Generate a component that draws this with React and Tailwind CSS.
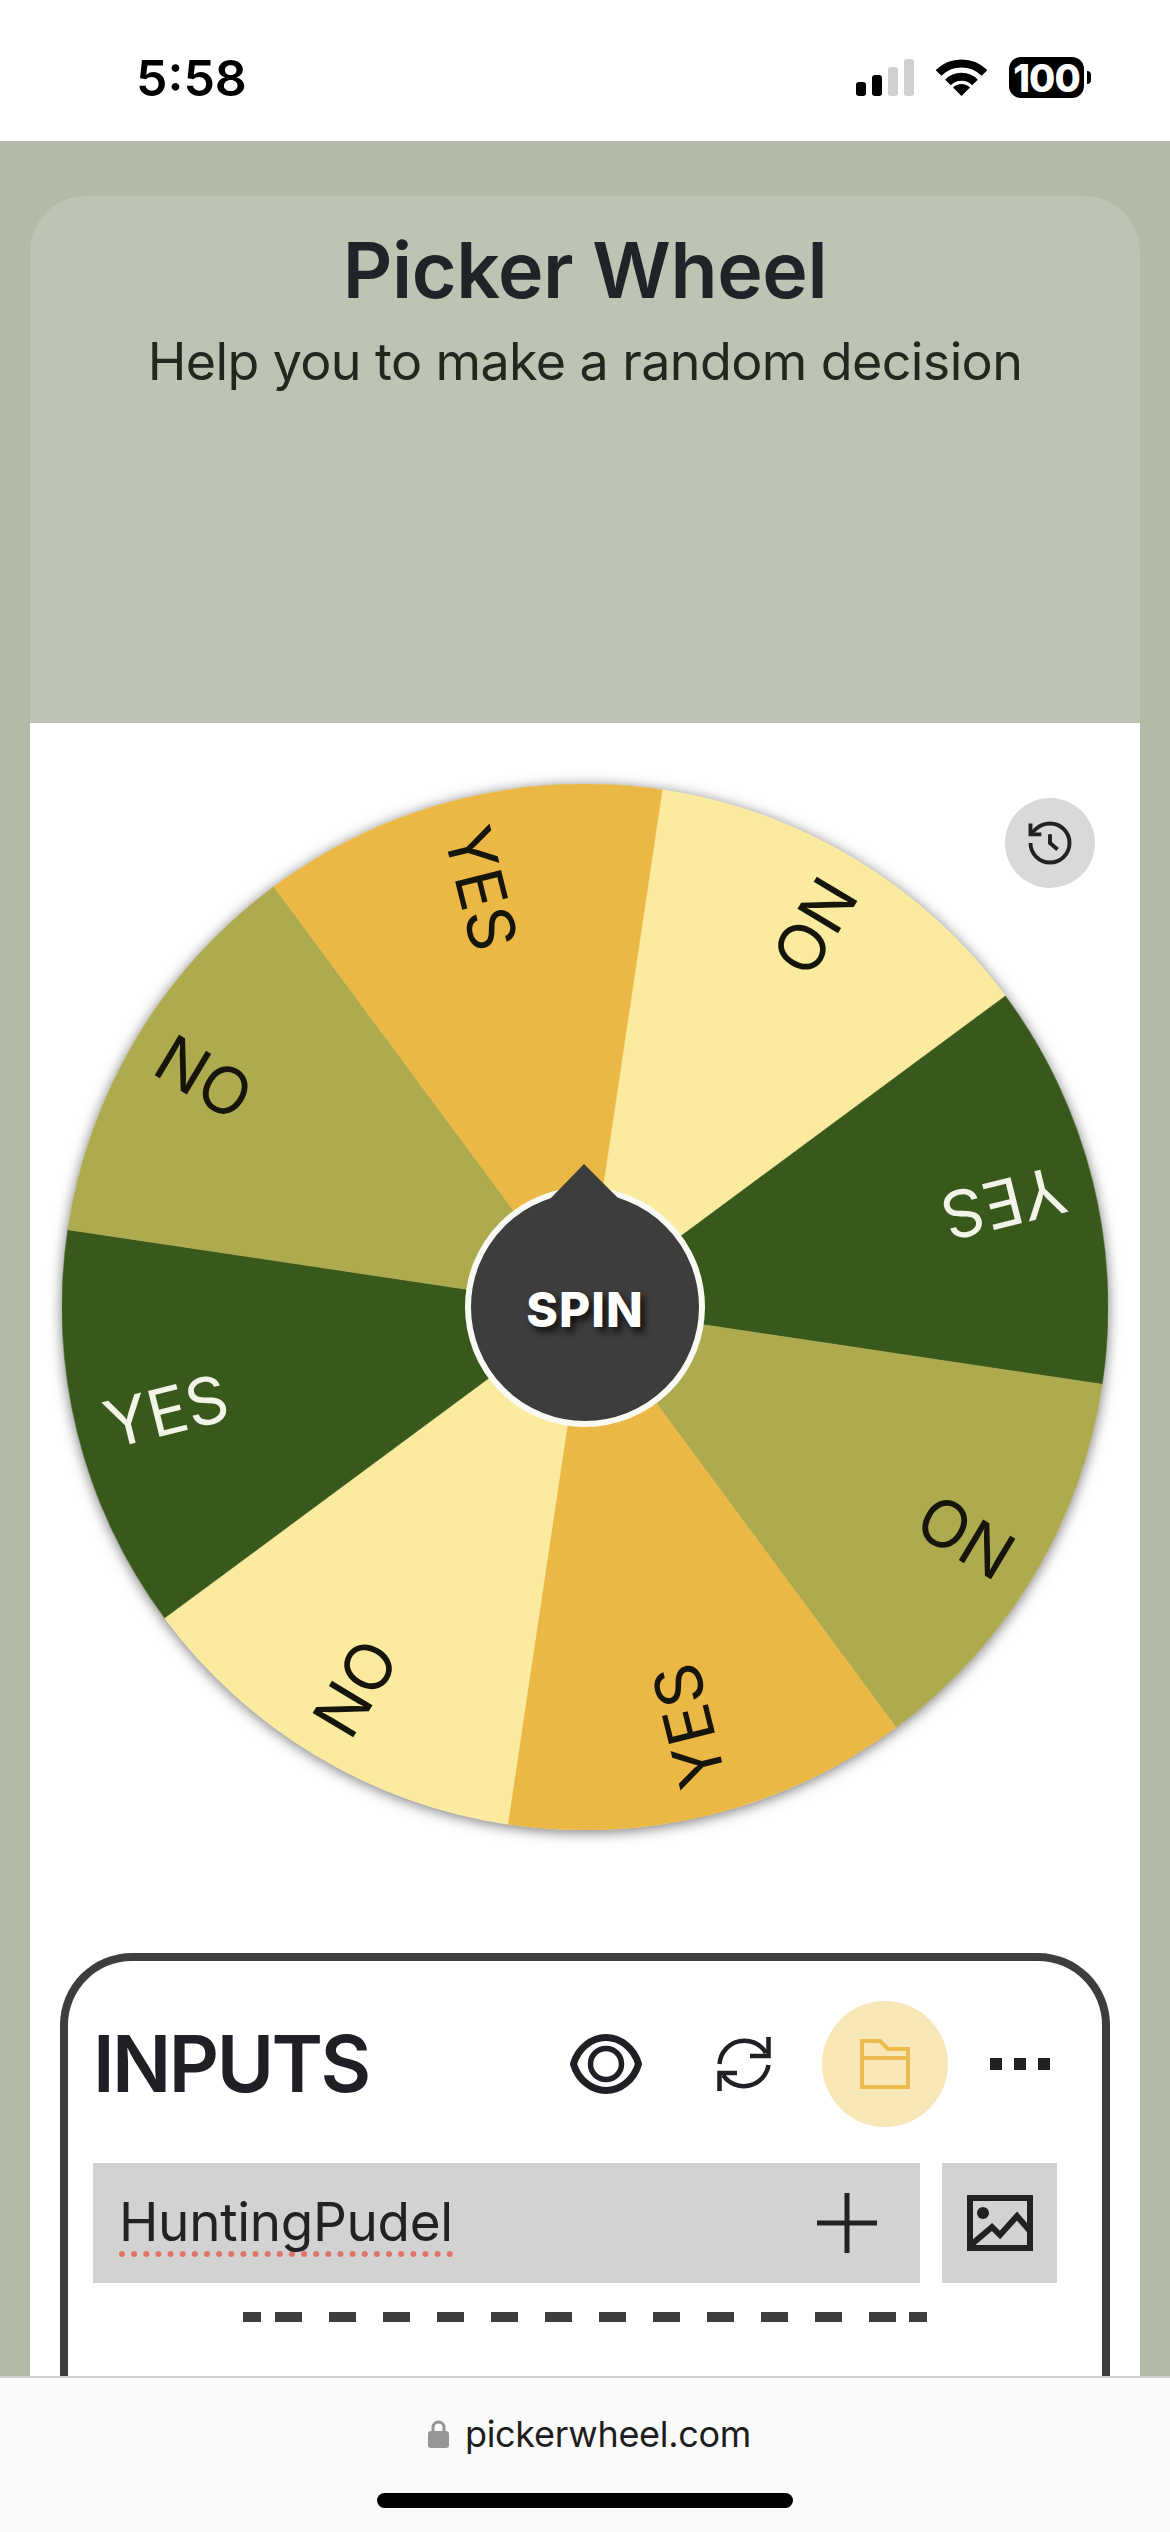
const C = 523;
const R = 523;
const SECTORS = [
  { mid: 31, fill: "#faeb9f", label: "NO", text: "#15150c" },
  { mid: 76, fill: "#38591b", label: "YES", text: "#f2f4e8" },
  { mid: 121, fill: "#aeaa4e", label: "NO", text: "#15150c" },
  { mid: 166, fill: "#ebb845", label: "YES", text: "#15150c" },
  { mid: 211, fill: "#faeb9f", label: "NO", text: "#15150c" },
  { mid: 256, fill: "#38591b", label: "YES", text: "#f2f4e8" },
  { mid: 301, fill: "#aeaa4e", label: "NO", text: "#15150c" },
  { mid: 346, fill: "#ebb845", label: "YES", text: "#15150c" },
];

function point(deg, r) {
  const a = (deg * Math.PI) / 180;
  return [C + r * Math.sin(a), C - r * Math.cos(a)];
}

function sectorPath(mid) {
  const [x1, y1] = point(mid - 22.5, R);
  const [x2, y2] = point(mid + 22.5, R);
  return `M${C} ${C}L${x1} ${y1}A${R} ${R} 0 0 1 ${x2} ${y2}Z`;
}

function Wheel() {
  return (
    <div className="relative mx-auto mt-[61px] h-[1046px] w-[1046px] rounded-full shadow-[0_2px_14px_rgba(0,0,0,0.55)]">
      <svg viewBox="0 0 1046 1046" className="block h-full w-full blur-[0.7px]">
        {SECTORS.map((s) => (
          <path key={s.mid} d={sectorPath(s.mid)} fill={s.fill} stroke={s.fill} strokeWidth="0.5" />
        ))}
        {SECTORS.map((s) => (
          <text
            key={s.mid}
            x={C - 494}
            y={C + 23}
            fill={s.text}
            fontSize="65"
            fontFamily="Inter, sans-serif"
            transform={`rotate(${s.mid + 90} ${C} ${C})`}
          >
            {s.label}
          </text>
        ))}
        <circle cx={C} cy={C} r="117" fill="#3d3d3d" stroke="#fafaf5" strokeWidth="6" />
        <path d={`M${C - 35} ${C - 108}L${C - 1} ${C - 143}L${C + 34} ${C - 108}Z`} fill="#3d3d3d" />
      </svg>
      <div className="absolute inset-0 flex items-center justify-center pt-[5px] text-[48px] font-extrabold leading-none tracking-[1px] text-white [text-shadow:4px_5px_7px_rgba(0,0,0,0.75)]">
        SPIN
      </div>
      <button className="absolute left-[943px] top-[14px] flex h-[90px] w-[90px] items-center justify-center rounded-full bg-[#d9d9d9]">
        <svg viewBox="0 0 24 24" className="h-[52px] w-[52px]" fill="none" stroke="#222222" strokeWidth="1.8">
          <path d="M3 12a9 9 0 1 0 9-9 9.75 9.75 0 0 0-6.74 2.74L3 8" />
          <path d="M3 3v5h5" />
          <path d="M12 8v4l3.5 3" />
        </svg>
      </button>
    </div>
  );
}

function StatusBar() {
  return (
    <div className="flex h-[141px] shrink-0 items-center justify-between bg-white pl-[136px] pr-[79px] pt-[14px]">
      <span className="text-[50px] font-semibold leading-none text-black">5:58</span>
      <div className="flex items-center">
        <svg width="58" height="37" viewBox="0 0 58 37">
          <rect x="0" y="23" width="10" height="14" rx="3" fill="#000" />
          <rect x="16" y="16" width="10" height="21" rx="3" fill="#000" />
          <rect x="32" y="8" width="10" height="29" rx="3" fill="#d0d0d0" />
          <rect x="48" y="0" width="10" height="37" rx="3" fill="#d0d0d0" />
        </svg>
        <svg width="51" height="37" viewBox="0 0 51 37" className="ml-[22px]" fill="none" stroke="#000">
          <path d="M2.5 14A32.5 32.5 0 0 1 48.5 14" strokeWidth="8" />
          <path d="M12 23.5A19 19 0 0 1 39 23.5" strokeWidth="8" />
          <path d="M25.5 37L17 28.5A12 12 0 0 1 34 28.5Z" fill="#000" stroke="none" />
        </svg>
        <div className="ml-[22px] flex h-[41px] w-[75px] items-center justify-center rounded-[12px] bg-black text-[38px] font-extrabold leading-none tracking-[-1px] text-white">
          100
        </div>
        <div className="ml-[3px] h-[13px] w-[4px] rounded-r-full bg-black" />
      </div>
    </div>
  );
}

function Header() {
  return (
    <div className="h-[527px] shrink-0 rounded-t-[56px] bg-[#bdc4b3] pt-[36px] text-center">
      <h1 className="text-[77px] font-semibold leading-[76px] tracking-[-0.4px] text-[#1f2428]">Picker Wheel</h1>
      <p className="mt-[24px] text-[52px] leading-[60px] tracking-[-0.6px] text-[#23271f]">Help you to make a random decision</p>
    </div>
  );
}

function PanelIcons() {
  return (
    <div className="ml-auto flex items-center pr-[7px]">
      <svg width="72" height="60" viewBox="0 0 72 60" fill="none" stroke="#1f2026" strokeWidth="7">
        <path d="M3.5 30C8 14 22 3.5 36 3.5C50 3.5 64 14 68.5 30C64 46 50 56.5 36 56.5C22 56.5 8 46 3.5 30Z" strokeLinejoin="round" />
        <circle cx="36" cy="30" r="15.5" strokeWidth="5.5" />
      </svg>
      <svg width="54" height="54" viewBox="0 0 54 54" className="ml-[75px]" fill="none" stroke="#1f2026" strokeWidth="4.5">
        <path d="M2.5 27A25 25 0 0 1 49 16" />
        <path d="M51.5 28A25 25 0 0 1 6 38" />
        <path d="M51.5 0V19H33" />
        <path d="M20 36H2.5V54" />
      </svg>
      <div className="ml-[51px] flex h-[126px] w-[126px] items-center justify-center rounded-full bg-[#f8e8b8]">
        <svg width="50" height="50" viewBox="0 0 50 50" fill="none" stroke="#ebbb50" strokeWidth="4">
          <path d="M2 2H20L28 10H48V48H2Z" />
          <path d="M2 19H48" />
        </svg>
      </div>
      <div className="ml-[42px] flex gap-[12px]">
        <div className="h-[12px] w-[12px] bg-[#1f2026]" />
        <div className="h-[12px] w-[12px] bg-[#1f2026]" />
        <div className="h-[12px] w-[12px] bg-[#1f2026]" />
      </div>
    </div>
  );
}

function Dashes() {
  const middle = Array.from({ length: 12 }, (_, i) => i);
  return (
    <div className="ml-[150px] mt-[29px] flex h-[10px] items-stretch">
      <div className="w-[18px] bg-[#3d3d3d]" />
      <div className="ml-[14px] flex gap-[27px]">
        {middle.map((i) => (
          <div key={i} className="w-[27px] bg-[#3d3d3d]" />
        ))}
      </div>
      <div className="ml-[13px] w-[18px] bg-[#3d3d3d]" />
    </div>
  );
}

function InputsPanel() {
  return (
    <div className="mx-[30px] mt-[123px] h-[600px] rounded-t-[72px] border-[8px] border-b-0 border-[#3d3d3d] bg-white pl-[25px] pr-[45px] pt-[40px]">
      <div className="flex h-[126px] items-center">
        <span className="text-[78px] font-semibold leading-none tracking-[-2.5px] text-[#1f2026]">INPUTS</span>
        <PanelIcons />
      </div>
      <div className="mt-[36px] flex h-[120px] gap-[22px]">
        <div className="flex flex-1 items-center justify-between bg-[#d2d2d2] pl-[26px] pr-[43px]">
          <span className="mt-[4px] inline-block border-b-[6px] border-dotted border-[#e0736a] text-[53px] leading-[58px] tracking-[-0.3px] text-[#222222]">
            HuntingPudel
          </span>
          <svg width="60" height="60" viewBox="0 0 60 60" fill="none" stroke="#222222" strokeWidth="5">
            <path d="M30 0V60M0 30H60" />
          </svg>
        </div>
        <div className="flex w-[115px] items-center justify-center bg-[#d2d2d2]">
          <svg width="66" height="56" viewBox="0 0 66 56" fill="none" stroke="#222222">
            <rect x="3" y="3" width="60" height="50" strokeWidth="6" />
            <circle cx="16" cy="18" r="6" fill="#222222" stroke="none" />
            <path d="M5 49L25 32L33 40L50 21L63 36" strokeWidth="6" />
          </svg>
        </div>
      </div>
      <Dashes />
    </div>
  );
}

function BottomBar() {
  return (
    <div className="absolute bottom-0 left-0 right-0 h-[156px] border-t-2 border-[#d0d0d0] bg-[#fafafa]">
      <div className="mt-[33px] flex items-center justify-center pl-[9px]">
        <svg width="21" height="28" viewBox="0 0 21 28">
          <path d="M5 13V7.5a5.5 5.5 0 0 1 11 0V13" fill="none" stroke="#959595" strokeWidth="3" />
          <rect x="0" y="11" width="21" height="17" rx="3" fill="#959595" />
        </svg>
        <span className="ml-[16px] text-[36px] leading-[46px] tracking-[-0.3px] text-[#1d1d1d]">pickerwheel.com</span>
      </div>
      <div className="mx-auto mt-[36px] h-[15px] w-[416px] rounded-full bg-black" />
    </div>
  );
}

export default function App() {
  return (
    <div className="relative flex h-[2532px] w-[1170px] flex-col overflow-hidden bg-white font-['Inter',sans-serif]">
      <StatusBar />
      <main className="flex min-h-0 flex-1 flex-col bg-[#b3bba8] px-[30px] pt-[55px]">
        <Header />
        <div className="min-h-0 flex-1 overflow-hidden bg-white">
          <Wheel />
          <InputsPanel />
        </div>
      </main>
      <BottomBar />
    </div>
  );
}
